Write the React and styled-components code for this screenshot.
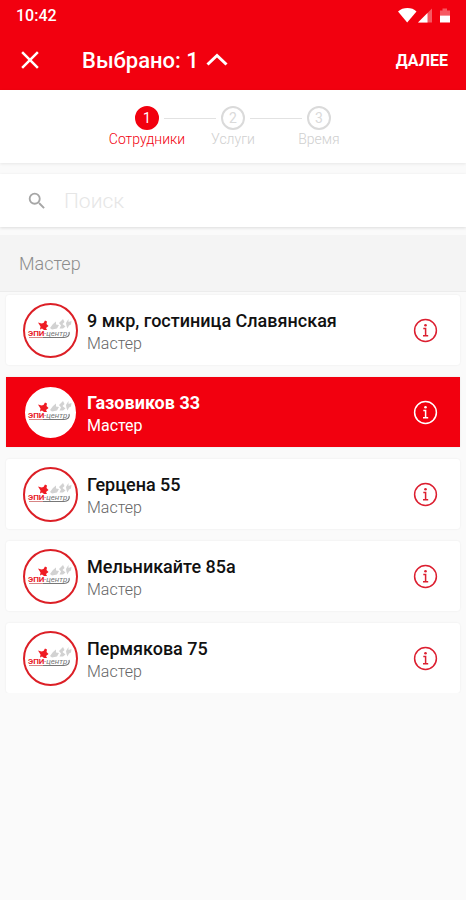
import React, { useState } from 'react';
import styled, { createGlobalStyle, css } from 'styled-components';
import { MdClose, MdSearch } from 'react-icons/md';

const GlobalStyle = createGlobalStyle`
  * {
    box-sizing: border-box;
  }

  body {
    margin: 0;
    background: #fafafa;
    font-family: Roboto, 'Noto Sans', sans-serif;
  }

  button,
  input {
    font-family: inherit;
  }
`;

const Header = styled.header`
  height: 90px;
  background: #f2000f;
  color: #ffffff;
`;

const StatusBar = styled.div`
  display: flex;
  justify-content: space-between;
  align-items: center;
  height: 30px;
  padding: 0 14px 0 16px;
  font-size: 16px;
  font-weight: 500;
`;

const Toolbar = styled.div`
  display: flex;
  align-items: center;
  height: 60px;
  padding: 0 18px 0 15px;
`;

const BarButton = styled.button`
  display: flex;
  align-items: center;
  padding: 0;
  border: none;
  background: none;
  color: inherit;
  cursor: pointer;
`;

const TitleButton = styled(BarButton)`
  gap: 7px;
  margin-left: 37px;
  font-size: 22px;
  font-weight: 500;
`;

const NextButton = styled(BarButton)`
  margin-left: auto;
  font-size: 16px;
  font-weight: 700;
`;

const Steps = styled.ol`
  display: flex;
  justify-content: center;
  height: 73px;
  margin: 0 0 11px;
  padding: 16px 0 0;
  list-style: none;
  background: #ffffff;
  box-shadow: 0 1px 3px rgba(0, 0, 0, 0.08);
`;

const Step = styled.li`
  width: 86px;
  text-align: center;
  font-size: 14px;
  font-weight: 300;
  line-height: 18px;
  color: ${props => (props.$active ? '#f2000f' : '#cfcfcf')};
`;

const StepTrack = styled.div`
  display: flex;
  align-items: center;
  gap: 5px;
`;

const StepLine = styled.span`
  flex: 1;
  height: 1px;
  background: ${props => (props.$visible ? '#e2e2e2' : 'transparent')};
`;

const StepNumber = styled.span`
  width: 24px;
  height: 24px;
  border: 2px solid ${props => (props.$active ? '#f2000f' : '#dadada')};
  border-radius: 50%;
  background: ${props => (props.$active ? '#f2000f' : '#ffffff')};
  color: ${props => (props.$active ? '#ffffff' : '#dadada')};
  font-size: 14px;
  font-weight: 400;
  line-height: 20px;
`;

const Search = styled.label`
  display: flex;
  align-items: center;
  gap: 16px;
  height: 53px;
  padding: 0 26px;
  background: #ffffff;
  color: #a6a6a6;
  box-shadow: 0 1px 3px rgba(0, 0, 0, 0.12);
`;

const SearchInput = styled.input`
  flex: 1;
  min-width: 0;
  padding: 0;
  border: none;
  outline: none;
  background: none;
  color: #222222;
  font-size: 21px;
  font-weight: 300;

  &::placeholder {
    color: #e6e6e6;
    opacity: 1;
  }
`;

const GroupTitle = styled.h2`
  margin: 8px 0 3px;
  padding: 2px 19px 0;
  background: #f4f4f4;
  border-bottom: 1px solid #ececec;
  color: #8c8c8c;
  font-size: 18px;
  font-weight: 300;
  line-height: 54px;
`;

const List = styled.ul`
  display: flex;
  flex-direction: column;
  gap: 12px;
  margin: 0;
  padding: 0 6px;
  list-style: none;
`;

const Card = styled.li`
  display: flex;
  align-items: center;
  height: 70px;
  padding-right: 22px;
  border-radius: 3px;
  background: #ffffff;
  color: #111111;
  box-shadow: 0 0 2px rgba(0, 0, 0, 0.08);

  ${props =>
    props.$selected &&
    css`
      border-radius: 0;
      background: #f2000f;
      color: #ffffff;
    `}
`;

const CardButton = styled.button`
  display: flex;
  align-items: center;
  flex: 1;
  gap: 9px;
  min-width: 0;
  height: 100%;
  padding: 0 0 0 17px;
  border: none;
  background: none;
  color: inherit;
  text-align: left;
  cursor: pointer;
`;

const Avatar = styled.span`
  display: flex;
  flex-shrink: 0;
  width: 55px;
  height: 55px;
  border: 2px solid ${props => (props.$selected ? '#f2000f' : '#dc1f26')};
  border-radius: 50%;
  background: #ffffff;
  overflow: hidden;
`;

const CardText = styled.span`
  display: flex;
  flex-direction: column;
  padding-top: 4px;
`;

const Name = styled.span`
  font-size: 18px;
  font-weight: ${props => (props.$selected ? 700 : 500)};
  line-height: 23px;
`;

const Role = styled.span`
  color: ${props => (props.$selected ? '#ffffff' : '#666666')};
  font-size: 16px;
  font-weight: ${props => (props.$selected ? 400 : 300)};
  line-height: 23px;
`;

const InfoButton = styled(BarButton)`
  color: ${props => (props.$selected ? '#ffffff' : '#dc1f30')};
`;

const StatusIcons = () => (
  <svg width="54" height="18" viewBox="0 0 54 18" fill="#fff" aria-hidden="true">
    <path d="M0 5.500C5 .9 14 .9 18.500 5.500L9.200 16.500Z" />
    <path d="M34 2.500V16.500H20Z" opacity="0.35" />
    <path d="M29.500 7V16.500H20Z" />
    <path d="M42 4.500H44.500V2.500H49V4.500H52V9.500H42Z" opacity="0.35" />
    <path d="M42 9.500H52V16.500H42Z" />
  </svg>
);

const ChevronUp = () => (
  <svg width="22" height="14" viewBox="0 0 22 14" fill="none" stroke="currentColor" strokeWidth="3" aria-hidden="true">
    <path d="M1.500 11.500L11 2.500L20.500 11.500" />
  </svg>
);

const InfoIcon = () => (
  <svg width="25" height="25" viewBox="0 0 25 25" fill="none" stroke="currentColor" aria-hidden="true">
    <circle cx="12.500" cy="12.500" r="10.900" strokeWidth="1.500" />
    <path d="M10.300 10.500H12.600V17.500M10 17.800H15.200" strokeWidth="1.500" />
    <circle cx="12.500" cy="7.200" r="1.300" fill="currentColor" stroke="none" />
  </svg>
);

const Logo = () => (
  <svg width="51" height="51" viewBox="0 0 51 51" aria-hidden="true">
    <path d="M13 17.500L16.500 18.500L18.500 18L20 15.500L22 16.500L21.500 19L23.500 21L21 23L22 25H19L17 23.500L15 24.500L15.500 21.500Z" fill="#ef1c24" />
    <g fill="#d2d2d2">
      <path d="M25 23L28 19L31 16.500L31 19.500L34 20L32 23.500L27 24.500Z" />
      <path d="M34 18L38 14L39.500 17L37.500 19L40.500 21.500L38 23.500L34.500 23.500L36 20.500Z" />
      <path d="M41 18L43.500 14L43.500 17L46.500 16L46 19.500L44 20.500L42.500 23.500L41.500 21Z" />
    </g>
    <text x="3" y="30.500" fill="#e8202a" fontSize="8" fontWeight="700" fontFamily="Roboto, sans-serif">ЭПИ</text>
    <text x="19" y="30.500" fill="#777" fontSize="8" fontStyle="italic" fontFamily="Roboto, sans-serif">-центр</text>
    <path d="M4 32.500H18" fill="none" stroke="#c66" strokeWidth="0.800" />
    <path d="M18 32.500H39C43 32.500 45 30 44 27" fill="none" stroke="#777" strokeWidth="1.200" />
  </svg>
);

const steps = ['Сотрудники', 'Услуги', 'Время'];

const employees = [
  { id: 1, name: '9 мкр, гостиница Славянская', role: 'Мастер' },
  { id: 2, name: 'Газовиков 33', role: 'Мастер' },
  { id: 3, name: 'Герцена 55', role: 'Мастер' },
  { id: 4, name: 'Мельникайте 85а', role: 'Мастер' },
  { id: 5, name: 'Пермякова 75', role: 'Мастер' }
];

const App = () => {
  const [selectedIds, setSelectedIds] = useState([2]);
  const [query, setQuery] = useState('');

  const toggleEmployee = (id) => {
    setSelectedIds(prev => (prev.includes(id) ? prev.filter(item => item !== id) : [...prev, id]));
  };

  const visibleEmployees = employees.filter(employee =>
    employee.name.toLowerCase().includes(query.trim().toLowerCase())
  );

  return (
    <>
      <GlobalStyle />
      <Header>
        <StatusBar>
          <span>10:42</span>
          <StatusIcons />
        </StatusBar>
        <Toolbar>
          <BarButton type="button" aria-label="Закрыть">
            <MdClose size={30} />
          </BarButton>
          <TitleButton type="button">
            Выбрано: {selectedIds.length}
            <ChevronUp />
          </TitleButton>
          <NextButton type="button">ДАЛЕЕ</NextButton>
        </Toolbar>
      </Header>

      <main>
        <Steps>
          {steps.map((step, index) => (
            <Step key={step} $active={index === 0}>
              <StepTrack>
                <StepLine $visible={index > 0} />
                <StepNumber $active={index === 0}>{index + 1}</StepNumber>
                <StepLine $visible={index < steps.length - 1} />
              </StepTrack>
              {step}
            </Step>
          ))}
        </Steps>

        <Search>
          <MdSearch size={22} />
          <SearchInput
            type="text"
            placeholder="Поиск"
            aria-label="Поиск"
            value={query}
            onChange={(e) => setQuery(e.target.value)}
          />
        </Search>

        <GroupTitle>Мастер</GroupTitle>
        <List>
          {visibleEmployees.map(({ id, name, role }) => {
            const selected = selectedIds.includes(id);
            return (
              <Card key={id} $selected={selected}>
                <CardButton type="button" aria-pressed={selected} onClick={() => toggleEmployee(id)}>
                  <Avatar $selected={selected}>
                    <Logo />
                  </Avatar>
                  <CardText>
                    <Name $selected={selected}>{name}</Name>
                    <Role $selected={selected}>{role}</Role>
                  </CardText>
                </CardButton>
                <InfoButton type="button" $selected={selected} aria-label={`Информация: ${name}`}>
                  <InfoIcon />
                </InfoButton>
              </Card>
            );
          })}
        </List>
      </main>
    </>
  );
};

export default App;
